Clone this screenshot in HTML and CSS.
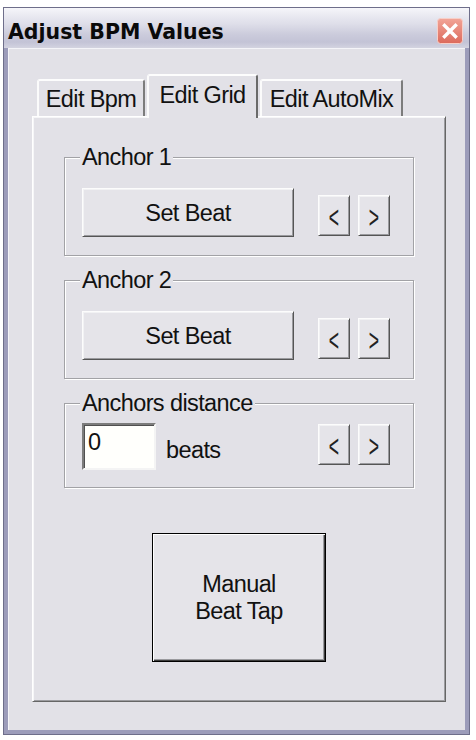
FILE: index.html
```html
<!DOCTYPE html>
<html>
<head>
<meta charset="utf-8">
<title>Adjust BPM Values</title>
<link rel="stylesheet" href="styles.css">
</head>
<body>
<div class="window">
  <div class="titlebar">
    <h1 class="title">Adjust BPM Values</h1>
    <div class="close">
      <svg width="26" height="26" viewBox="0 0 26 26">
        <defs>
          <linearGradient id="cg" x1="0" y1="0" x2="0" y2="1">
            <stop offset="0" stop-color="#f2a497"/>
            <stop offset="1" stop-color="#dc6a5c"/>
          </linearGradient>
        </defs>
        <rect x="0.5" y="0.5" width="25" height="25" rx="3" fill="url(#cg)" stroke="#f7cfc8"/>
        <path d="M7.5 7.5 L18.5 18.5 M18.5 7.5 L7.5 18.5" stroke="#fff" stroke-width="3.4" stroke-linecap="square"/>
      </svg>
    </div>
  </div>
  <div class="client">
    <div class="tabs">
      <div class="tab t1">Edit Bpm</div>
      <div class="tab t2 active">Edit Grid</div>
      <div class="tab t3">Edit AutoMix</div>
    </div>
    <div class="pane">
      <fieldset class="group">
        <legend>Anchor 1</legend>
        <div class="row">
          <button class="btn wide">Set Beat</button>
          <div class="arrows">
            <button class="btn arrow"><span class="glyph">&lt;</span></button>
            <button class="btn arrow"><span class="glyph">&gt;</span></button>
          </div>
        </div>
      </fieldset>
      <fieldset class="group">
        <legend>Anchor 2</legend>
        <div class="row">
          <button class="btn wide">Set Beat</button>
          <div class="arrows">
            <button class="btn arrow"><span class="glyph">&lt;</span></button>
            <button class="btn arrow"><span class="glyph">&gt;</span></button>
          </div>
        </div>
      </fieldset>
      <fieldset class="group compact">
        <legend>Anchors distance</legend>
        <div class="row">
          <input class="field" type="text" value="0">
          <span class="beats">beats</span>
          <div class="arrows near">
            <button class="btn arrow"><span class="glyph">&lt;</span></button>
            <button class="btn arrow"><span class="glyph">&gt;</span></button>
          </div>
        </div>
      </fieldset>
      <button class="btn default big">Manual<br>Beat Tap</button>
    </div>
  </div>
</div>
</body>
</html>
```
FILE: styles.css
```css
* { box-sizing: border-box; }

body {
  margin: 0;
  background: #ffffff;
  font-family: "Liberation Sans", Arial, sans-serif;
  font-size: 23.5px;
  letter-spacing: -0.6px;
  color: #111;
}

.window {
  margin: 7px 0 0 3px;
  width: 467px;
  height: 728px;
  border: 1px solid #6e6e8a;
  background: #9c9cba;
  padding: 0 4px 4px;
  display: flex;
  flex-direction: column;
}

.titlebar {
  height: 40px;
  margin: 0 -4px;
  display: flex;
  align-items: flex-start;
  background: linear-gradient(to bottom, #f6f6fa 0%, #ececf3 15%, #dedee9 40%, #cccCdc 65%, #c3c3d6 85%, #d3d3e0 100%);
}

.title {
  margin: 0;
  padding: 8px 0 0 4px;
  font: bold 20.5px/32px "DejaVu Sans", Verdana, sans-serif;
  letter-spacing: 0;
  color: #0a0a0a;
  white-space: nowrap;
}

.close {
  margin: 10px 6px 0 auto;
  width: 26px;
  height: 26px;
}
.close svg { display: block; }

.client {
  flex: 1;
  background: #e2e1e7;
  box-shadow: inset 1px 1px 0 #f4f4f8;
  padding: 26px 19px 28px 24px;
  display: flex;
  flex-direction: column;
}

.tabs {
  display: flex;
  align-items: flex-end;
  height: 42px;
  padding-left: 5px;
}

.tab {
  height: 37px;
  border: 2px solid;
  border-bottom: 0;
  border-color: #fdfdfd #7c7c7c #7c7c7c #fbfbfb;
  border-radius: 3px 3px 0 0;
  padding-top: 6px;
  line-height: 24px;
  text-align: center;
  background: #e2e1e7;
  white-space: nowrap;
}
.t1 { width: 108px; margin-right: 2px; }
.t2 { width: 111px; margin-right: 2px; }
.t3 { width: 143px; }

.tab.active {
  height: 44px;
  padding-top: 7px;
  margin-bottom: -2px;
  position: relative;
  z-index: 1;
  border-right-color: #6a6a6a;
}

.pane {
  flex: 1;
  border: 1px solid;
  border-color: #ffffff #666666 #666666 #ffffff;
  box-shadow: inset 1px 1px 0 #f6f6f8, inset -1px -1px 0 #9c9ca0;
  padding: 28px 31px 0;
  display: flex;
  flex-direction: column;
}

.group {
  margin: 0 0 12px;
  padding: 19px 23px 18px 17px;
  border: 1px solid #a2a2a6;
  box-shadow: 1px 1px 0 #ffffff, inset 1px 1px 0 #ffffff;
  min-width: 0;
}
.group.compact { padding-top: 8px; padding-bottom: 17px; }

.group legend {
  padding: 0 2px;
  margin-left: -2px;
  line-height: 24px;
  background: #e2e1e7;
}

.row {
  display: flex;
  align-items: flex-start;
}

.btn {
  font: inherit;
  letter-spacing: inherit;
  color: #111;
  padding: 0;
  margin: 0;
  background: #e5e4e9;
  border: 1px solid;
  border-color: #fcfcfc #555555 #555555 #fcfcfc;
  box-shadow: inset 1px 1px 0 #f2f2f4, inset -1px -1px 0 #9a9a9e;
  line-height: 24px;
}

.wide { width: 212px; height: 49px; }

.arrows {
  margin-left: auto;
  margin-top: 7px;
  display: flex;
  gap: 8px;
}
.arrows.near { margin-top: 1px; }

.arrow {
  width: 32px;
  height: 41px;
  padding-top: 3px;
}

.glyph {
  display: inline-block;
  transform: scale(0.75, 1.35);
  color: #222;
}

.field {
  width: 74px;
  height: 47px;
  margin: 0;
  padding: 0 4px 8px;
  font: inherit;
  letter-spacing: inherit;
  color: #111;
  background: #fffffc;
  border: 2px solid;
  border-color: #7c7c7c #f4f4f4 #f4f4f4 #7c7c7c;
  box-shadow: inset 1px 1px 0 #505050;
  outline: none;
}

.beats {
  margin: 15px 0 0 10px;
  line-height: 24px;
}

.big {
  align-self: center;
  margin-top: 33px;
  width: 174px;
  height: 129px;
  line-height: 27px;
  border: 1px solid #000;
  box-shadow: inset 1px 1px 0 #ffffff, inset -1px -1px 0 #3c3c3c, inset -2px -2px 0 #9a9a9e;
}
```
